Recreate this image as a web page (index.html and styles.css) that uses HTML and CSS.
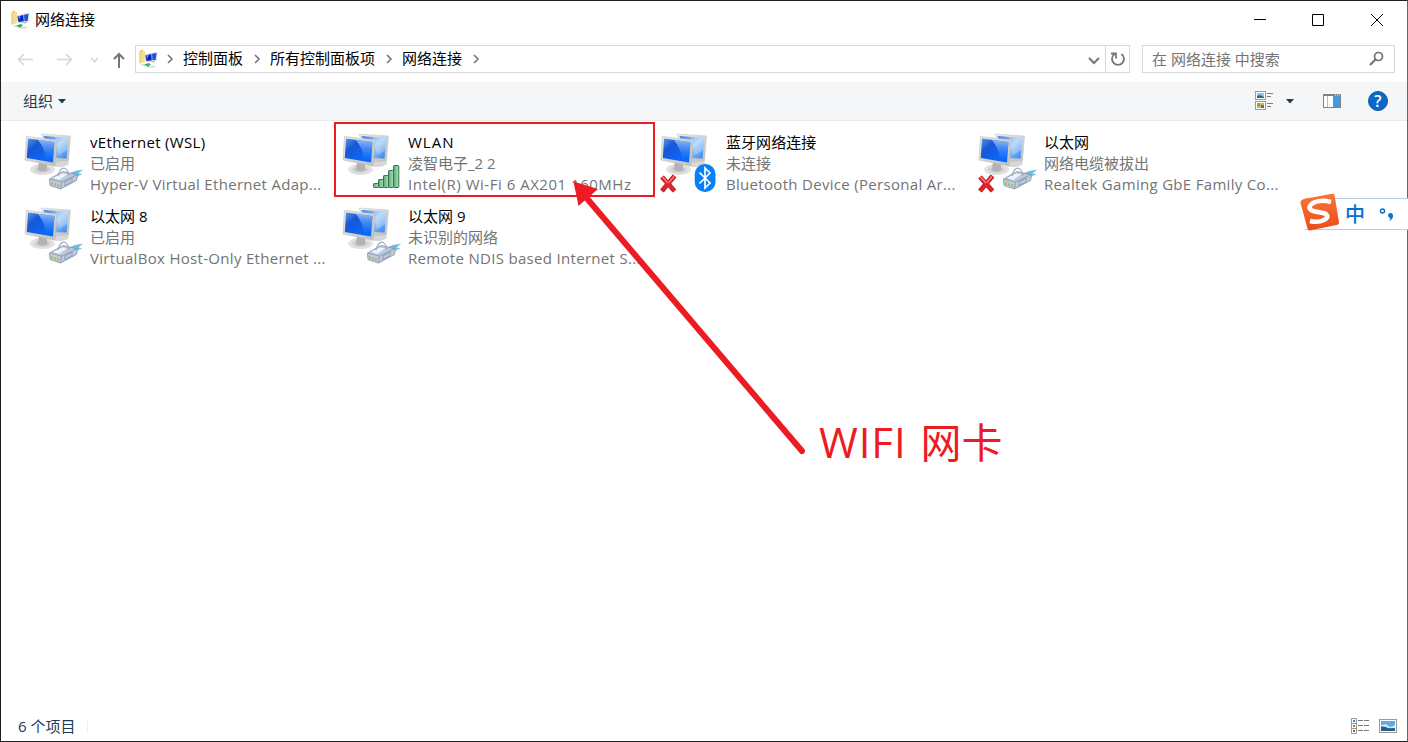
FILE: index.html
```
<!DOCTYPE html>
<html lang="zh-CN">
<head>
<meta charset="utf-8">
<title>网络连接</title>
<link rel="stylesheet" href="styles.css">
</head>
<body>
<svg class="defs" aria-hidden="true">
  <defs>
    <linearGradient id="screen" x1="0" y1="0" x2="1" y2="1"><stop offset="0" stop-color="#5b9aec"/><stop offset=".3" stop-color="#1857d6"/><stop offset=".7" stop-color="#0b66f5"/><stop offset="1" stop-color="#086cff"/></linearGradient>
    <linearGradient id="screenBack" x1="0" y1="0" x2="1" y2="1"><stop offset="0" stop-color="#2f7df0"/><stop offset=".5" stop-color="#a5d2fa"/><stop offset="1" stop-color="#2d7cf0"/></linearGradient>
    <linearGradient id="glare" x1="0" y1="0" x2="0" y2="1"><stop offset="0" stop-color="#c5e2ff" stop-opacity=".7"/><stop offset="1" stop-color="#2f86ff" stop-opacity=".15"/></linearGradient>
    <linearGradient id="frame" x1="0" y1="0" x2="1" y2="1"><stop offset="0" stop-color="#ececec"/><stop offset="1" stop-color="#bdbdbd"/></linearGradient>
    <radialGradient id="foot"><stop offset="0" stop-color="#9d9d9d"/><stop offset=".55" stop-color="#d2d2d2"/><stop offset="1" stop-color="#ededed"/></radialGradient>
    <linearGradient id="bar" x1="0" y1="0" x2="1" y2="0"><stop offset="0" stop-color="#58a878"/><stop offset="1" stop-color="#b2e0bd"/></linearGradient>
    <linearGradient id="folder" x1="0" y1="0" x2="1" y2="0"><stop offset="0" stop-color="#f7e3a0"/><stop offset="1" stop-color="#dfb94f"/></linearGradient>
    <linearGradient id="orange" x1="0" y1="0" x2="0" y2="1"><stop offset="0" stop-color="#ff7434"/><stop offset="1" stop-color="#e94d18"/></linearGradient>
  </defs>
  <symbol id="monitors" viewBox="0 0 68 74">
    <ellipse cx="43" cy="41" rx="10" ry="4" fill="#d8d8d8"/>
    <path d="M25 12 54.500 14 52.500 39 38 40Z" fill="url(#frame)" stroke="#cacaca" stroke-width=".6"/>
    <path d="M27.500 14 52.500 16 50.500 36.500 38 36Z" fill="url(#screenBack)"/>
    <path d="M39 15 52.500 16 51.600 28 43 33Z" fill="#fff" opacity=".25"/>
    <ellipse cx="26.500" cy="47.500" rx="12" ry="5" fill="url(#foot)" stroke="#cdcdcd" stroke-width=".6"/>
    <path d="M23 40 31 42 31 48Q26 50 22 47Z" fill="#b2b2b2"/>
    <path d="M10.500 14.500 41 18 39 44 9 38Z" fill="url(#frame)" stroke="#bdbdbd" stroke-width=".6"/>
    <path d="M12 16.500 38.500 20 37 40.500 10.800 36Z" fill="url(#screen)"/>
    <path d="M22 18 38.500 20 37.200 35 30 37Q29 27 22 18Z" fill="url(#glare)"/>
  </symbol>
  <symbol id="plug" viewBox="0 0 68 74">
    <path d="M53 52Q58 48.500 66.500 48L62 51.500 66 52.500Q61 53 60 57Z" fill="#62c0e7" stroke="#8ab6ca" stroke-width=".4"/>
    <path d="M33.500 57 47 49.500 61.500 53 60.500 58.500 44.500 67 34 63.500Z" fill="#becbdc" stroke="#8493aa" stroke-width=".8"/>
    <path d="M34 57 45.500 60 60.500 53M45.500 60 44.500 67" fill="none" stroke="#8b9bb1" stroke-width=".9"/>
    <path d="M37 56 46 51.500 51 52.500 43 58Z" fill="#eef4fc"/>
    <path d="M42 54Q44 46 48 46 52 47 53 54M49 60 56 56 56 60 49 63.500Z" fill="none" stroke="#93a3bb" stroke-width="1.100"/>
    <path d="M36 60V63M39 61V64M42 62V65" stroke="#b8b05f" stroke-width="1.500"/>
  </symbol>
  <symbol id="signal" viewBox="0 0 68 74">
    <g fill="url(#bar)" stroke="#287848" stroke-width="1">
      <rect x="39.500" y="61.500" width="5" height="4" rx=".8"/><rect x="44.500" y="57.500" width="5" height="8" rx=".8"/><rect x="49.500" y="53.500" width="5" height="12" rx=".8"/><rect x="54.500" y="48.500" width="5" height="17" rx=".8"/><rect x="59.500" y="43.500" width="5.300" height="22" rx=".8"/>
    </g>
  </symbol>
  <symbol id="cross" viewBox="0 0 68 74">
    <path d="M10 55 22.500 69M22.500 54 10 69" fill="none" stroke="#b51c22" stroke-width="4.800"/>
    <path d="M10 55 22.500 69M22.500 54 10 69" fill="none" stroke="#de252c" stroke-width="3.400"/>
    <path d="M10 54.500 16 61M22 54.500 17 60.500" fill="none" stroke="#f58a8d" stroke-width="1.200"/>
  </symbol>
  <symbol id="bluetooth" viewBox="0 0 68 74">
    <rect x="42.700" y="42" width="20.800" height="28" rx="10" fill="#0682f5"/>
    <path d="M47.500 50.500 58 61 53 66V46L58 51 47.500 61.500" fill="none" stroke="#fff" stroke-width="1.700"/>
  </symbol>
  <symbol id="netfolder" viewBox="0 0 20 20">
    <path d="M1 2 5 .5V13L1 15Z" fill="url(#folder)"/><path d="M3 3 7 2V13L3 14Z" fill="#f3dc94"/>
    <path d="M12 4 19.500 3 18.500 12 12 12Z" fill="#cbd5e8"/><path d="M13 5 18.500 4 17.500 11 13 11Z" fill="#1f50d6"/>
    <path d="M6.500 5.500 14 4 14.500 12 8 13Z" fill="#d4dae6"/><path d="M7.500 6.500 13.300 5 13.700 11.300 8.500 12Z" fill="#0627ba"/><path d="M8 6.500 10.500 6 9.500 9.500Z" fill="#729ded"/>
    <path d="M3.500 15.500Q12 19 17 17.500" stroke="#b8c2c9" fill="none"/><path d="M6 15.500 11 14 13 15.500 10 17.500Z" fill="#2bb85a"/><path d="M10 12.500 17 12 16 13.500Z" fill="#a4b0bd"/>
  </symbol>
</svg>

<main class="window">
  <header class="titlebar">
    <svg class="app-icon" width="20" height="20"><use href="#netfolder"/></svg>
    <h1 class="title">网络连接</h1>
    <svg class="captions" width="140" height="20" viewBox="0 0 140 20" fill="none" stroke="#000">
      <path d="M8 9.500H20M66.500 4.500H77.500V15.500H66.500ZM125 4 137 16M137 4 125 16"/>
    </svg>
  </header>

  <nav class="navbar">
    <svg class="history" width="109" height="28" viewBox="0 0 109 28" fill="none" stroke-width="1.600">
      <path d="M32 14.500H17.500M23 9 17.500 14.500 23 20M56 14.500H70.500M65 9 70.500 14.500 65 20M90 13 93.500 16.500 97 13" stroke="#d6d6d6"/>
    </svg>
    <svg class="up" width="16" height="28" viewBox="0 0 16 28" fill="none" stroke="#767676" stroke-width="2"><path d="M8 22V8M3 13 8 8 13 13"/></svg>
    <div class="address">
      <svg class="place" width="20" height="20"><use href="#netfolder"/></svg>
      <svg class="chev" viewBox="0 0 8 10"><path d="M2 1 6 5 2 9"/></svg>
      <span class="crumb">控制面板</span>
      <svg class="chev" viewBox="0 0 8 10"><path d="M2 1 6 5 2 9"/></svg>
      <span class="crumb">所有控制面板项</span>
      <svg class="chev" viewBox="0 0 8 10"><path d="M2 1 6 5 2 9"/></svg>
      <span class="crumb">网络连接</span>
      <svg class="chev" viewBox="0 0 8 10"><path d="M2 1 6 5 2 9"/></svg>
      <svg class="drop" width="12" height="8" viewBox="0 0 12 8"><path d="M1 1 6 6 11 1" fill="none" stroke="#767676" stroke-width="2"/></svg>
      <div class="refresh"><svg width="16" height="18" viewBox="0 0 16 18" fill="none" stroke="#767676" stroke-width="1.800"><path d="M11.500 4A6 6 0 1 1 4.500 4M1 3.500H6V8.500"/></svg></div>
    </div>
    <div class="search"><span>在 网络连接 中搜索</span>
      <svg width="16" height="16" viewBox="0 0 16 16" fill="none" stroke="#6f6f6f"><circle cx="9.500" cy="5.500" r="4" stroke-width="1.700"/><path d="M6.500 8.500 1 14" stroke-width="2"/></svg>
    </div>
  </nav>

  <div class="toolbar">
    <span class="organize">组织</span>
    <svg class="caret" width="8" height="5" viewBox="0 0 8 5"><path d="M0 0H8L4 4.500Z"/></svg>
    <svg class="view" width="19" height="20" viewBox="0 0 19 20">
      <g fill="#fff" stroke="#9b9b9b"><rect x=".5" y=".5" width="10" height="8"/><rect x=".5" y="10.500" width="10" height="8"/></g>
      <path d="M2 2H9V7H2Z" fill="#8bc6ed"/><path d="M2 5 5 4 9 6V7H2Z" fill="#286d73"/><path d="M2 12H9V17H2Z" fill="#a6c86a"/><path d="M2 12H5V15H2Z" fill="#d7812f"/><path d="M6 14H9V17H6Z" fill="#c44b35"/>
      <path d="M12 2.500H18M12 5.500H16M12 12.500H18M12 15.500H16" stroke="#7d7d7d"/>
    </svg>
    <svg class="caret view-caret" width="8" height="5" viewBox="0 0 8 5"><path d="M0 0H8L4 4.500Z"/></svg>
    <svg class="pane" width="18" height="14" viewBox="0 0 18 14"><rect x=".5" y=".5" width="17" height="13" fill="#fff" stroke="#818181"/><path d="M0 1H18" stroke="#818181" stroke-width="2"/><path d="M4.500 2V13" stroke="#bbb"/><path d="M10 2H17V13H10Z" fill="#429ce3"/><path d="M12 1H13M14 1H15M16 1H17" stroke="#fff"/></svg>
    <span class="help">?</span>
  </div>

  <section class="connections">
    <article class="connection">
      <svg class="icon"><use href="#monitors"/><use href="#plug"/></svg>
      <div class="info"><h2>vEthernet (WSL)</h2><p>已启用</p><p class="device">Hyper-V Virtual Ethernet Adap...</p></div>
    </article>
    <article class="connection wlan">
      <svg class="icon"><use href="#monitors"/><use href="#signal"/></svg>
      <div class="info"><h2>WLAN</h2><p>凌智电子_2 2</p><p class="device">Intel(R) Wi-Fi 6 AX201 160MHz</p></div>
    </article>
    <article class="connection">
      <svg class="icon"><use href="#monitors"/><use href="#bluetooth"/><use href="#cross"/></svg>
      <div class="info"><h2 class="cjk">蓝牙网络连接</h2><p>未连接</p><p class="device">Bluetooth Device (Personal Ar...</p></div>
    </article>
    <article class="connection">
      <svg class="icon"><use href="#monitors"/><use href="#plug"/><use href="#cross"/></svg>
      <div class="info"><h2 class="cjk">以太网</h2><p>网络电缆被拔出</p><p class="device">Realtek Gaming GbE Family Co...</p></div>
    </article>
    <article class="connection">
      <svg class="icon"><use href="#monitors"/><use href="#plug"/></svg>
      <div class="info"><h2 class="cjk">以太网 8</h2><p>已启用</p><p class="device">VirtualBox Host-Only Ethernet ...</p></div>
    </article>
    <article class="connection">
      <svg class="icon"><use href="#monitors"/><use href="#plug"/></svg>
      <div class="info"><h2 class="cjk">以太网 9</h2><p>未识别的网络</p><p class="device">Remote NDIS based Internet S...</p></div>
    </article>
  </section>

  <footer class="statusbar">
    <span class="count">6 个项目</span>
    <svg class="details" width="19" height="16" viewBox="0 0 19 16"><path d="M.5 .5H5.500V15.500H.5ZM.5 5.500H5.500M.5 10.500H5.500" fill="#fff" stroke="#999"/><path d="M2 3H4" stroke="#4589ca" stroke-width="2"/><path d="M2 8H4" stroke="#9a8630" stroke-width="2"/><path d="M2 13H4" stroke="#c54834" stroke-width="2"/><path d="M7 2.500H12M13 2.500H18M7 7.500H12M13 7.500H18M7 12.500H12M13 12.500H18" stroke="#777"/></svg>
    <svg class="large" width="18" height="14" viewBox="0 0 18 14"><rect x=".5" y=".5" width="17" height="13" fill="#fff" stroke="#999"/><path d="M2 2H16V12H2Z" fill="#5ba9e6"/><path d="M2 6 7 5 11 8 16 6V9H2Z" fill="#c8e7fa"/><path d="M2 7.500Q6 7 10 9.500L16 9V12H2Z" fill="#285f79"/></svg>
  </footer>
</main>

<aside class="ime">
  <svg class="ime-logo" width="40" height="40" viewBox="0 0 40 40"><path d="M4 6 32 .8Q34 .5 34.500 2L39 29Q39.500 31 37.500 31.700L10 37.500Q8 38 7.500 35.500L.5 10Q0 7 4 6Z" fill="url(#orange)"/><path d="M31 9Q20 6 13 10Q6 15 13 18L25 20.500Q30 24 24 27Q18 30 10 28" fill="none" stroke="#fff" stroke-width="4.600"/></svg>
  <span class="ime-mode">中</span>
  <svg class="ime-punct" width="16" height="16" viewBox="0 0 16 16"><circle cx="3.500" cy="4" r="2" fill="none" stroke="#0870d1" stroke-width="1.500"/><circle cx="11.500" cy="8.500" r="2.400" fill="#0870d1"/><path d="M13.900 8Q14.500 12.500 10 14 12 11.500 11 9Z" fill="#0870d1"/></svg>
</aside>

<div class="highlight"></div>
<svg class="arrow" width="1408" height="742" viewBox="0 0 1408 742"><path d="M802 451 584 195" stroke="#ed1c24" stroke-width="6" stroke-linecap="round"/><path d="M573.500 181.500 598 189 578.500 206Z" fill="#ed1c24"/></svg>
<div class="note"><span class="note-latin">WIFI</span><span class="note-cjk">网卡</span></div>
</body>
</html>
```
FILE: styles.css
```
* { box-sizing: border-box; }
body {
  margin: 0;
  width: 1408px;
  height: 742px;
  overflow: hidden;
  position: relative;
  background: #fff;
  color: #000;
  font: 15px/21px "Open Sans", "Noto Sans CJK SC", sans-serif;
  white-space: nowrap;
}
svg { display: block; flex: none; }
h1, h2, p { margin: 0; font-size: inherit; font-weight: 400; }
.defs { position: absolute; width: 0; height: 0; }
.window {
  width: 1408px;
  height: 742px;
  display: flex;
  flex-direction: column;
  border: 1px solid #211e20;
  border-right-color: #666;
}
.titlebar { height: 37px; flex: none; display: flex; align-items: center; padding-left: 9px; }
.title { margin-left: 5px; }
.captions { margin-left: auto; margin-right: 21px; }
.navbar { height: 44px; flex: none; display: flex; align-items: center; padding: 0 12px 2px 0; }
.up { margin: 2px 0 0 1px; }
.address { flex: 1; height: 28px; margin-left: 8px; border: 1px solid #d9d9d9; display: flex; align-items: center; }
.place { margin-left: 2px; }
.chev { width: 8px; height: 10px; margin: 0 9px 0 10px; fill: none; stroke: #767676; stroke-width: 1.6; }
.place + .chev { margin: 0 9px 0 8px; }
.crumb { margin-top: -1px; }
.drop { margin-left: auto; margin-right: 5px; margin-top: 3px; }
.refresh { width: 24px; height: 26px; border-left: 1px solid #d9d9d9; display: flex; align-items: center; justify-content: center; }
.search { width: 253px; height: 28px; margin-left: 12px; border: 1px solid #d9d9d9; padding: 0 9px 0 9px; color: #747474; display: flex; align-items: center; justify-content: space-between; }
.toolbar { height: 39px; flex: none; background: #f5f6f7; border-bottom: 1px solid #e8eaec; display: flex; align-items: center; padding: 0 19px 0 22px; color: #1e395b; }
.caret { margin-left: 5px; fill: #1e395b; }
.view { margin-left: auto; }
.view-caret { margin-left: 12px; }
.pane { margin: 0 27px 0 29px; }
.help { width: 20px; height: 20px; border-radius: 50%; background: #0a68c9; border: 1px solid #10579f; color: #fff; font-size: 16px; font-weight: 600; line-height: 18px; text-align: center; }
.connections { flex: 1; display: grid; grid-template-columns: repeat(4, 318px); grid-auto-rows: 74px; align-content: start; padding: 1px 0 0 15px; }
.connection { display: flex; height: 74px; }
.icon { width: 68px; height: 74px; }
.info { padding: 10px 0 0 6px; color: #747474; }
.info h2 { color: #000; letter-spacing: .33px; }
.info .cjk { letter-spacing: .05px; }
.info .device { letter-spacing: .31px; }
.wlan h2 { letter-spacing: 1px; }
.wlan .device { letter-spacing: .52px; }
.statusbar { height: 30px; display: flex; align-items: center; padding: 0 10px 0 17px; color: #1e395b; }
.count { padding-right: 12px; border-right: 1px solid #eee; line-height: 14px; margin-top: -1px; }
.details { margin-left: auto; }
.large { margin-left: 9px; }
.ime { position: absolute; left: 1305px; top: 198px; width: 103px; height: 32px; display: flex; align-items: center; background: #fff; border: solid #b9cde0; border-width: 1px 0; }
.ime-logo { margin: -3px 0 0 -5px; }
.ime-mode { margin-left: 5px; padding-top: 2px; font-size: 20px; font-weight: 500; line-height: 28px; color: #0870d1; }
.ime-punct { margin: 2px 0 0 14px; }
.highlight { position: absolute; left: 334px; top: 122px; width: 321px; height: 75px; border: 2px solid #ed1c24; }
.arrow { position: absolute; left: 0; top: 0; }
.note { position: absolute; left: 819px; top: 412px; display: flex; gap: 14px; font-size: 42px; line-height: 60px; color: #ed1c24; }
.note-latin { letter-spacing: .9px; }
.note-cjk { font-size: 41px; }
```
